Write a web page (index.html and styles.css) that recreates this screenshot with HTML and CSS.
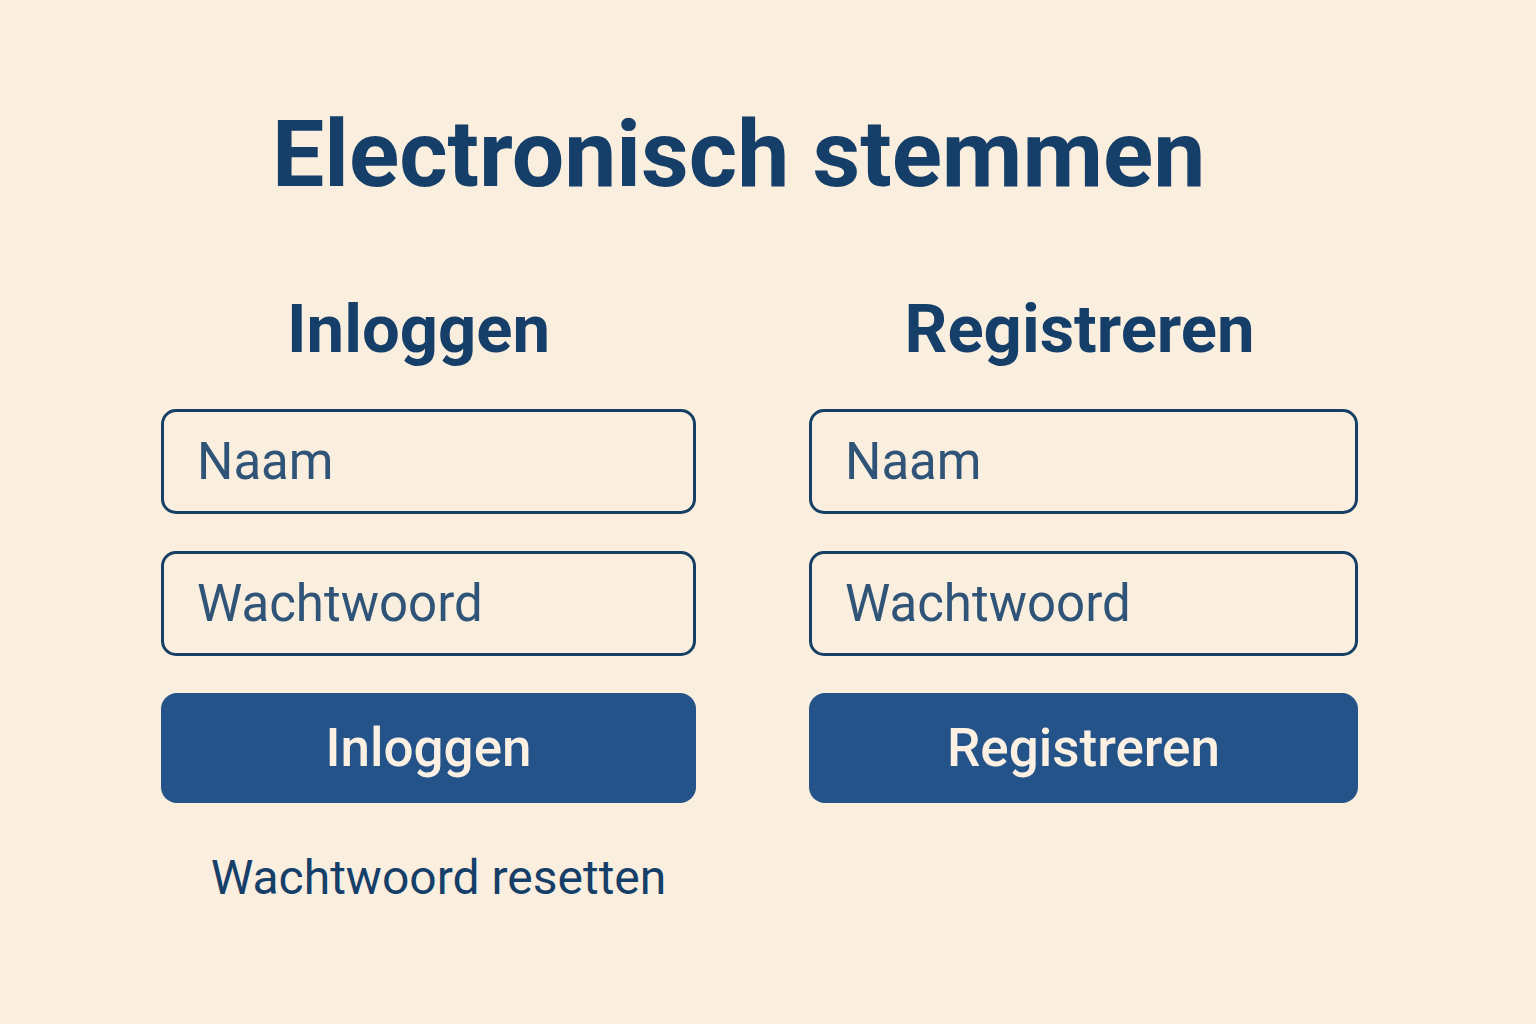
FILE: index.html
```html
<!DOCTYPE html>
<html lang="nl">
<head>
<meta charset="utf-8">
<title>Electronisch stemmen</title>
<link rel="stylesheet" href="styles.css">
</head>
<body>
<main class="page">
  <h1 class="title">Electronisch stemmen</h1>
  <div class="columns">
    <section class="panel panel-login">
      <h2 class="panel-title">Inloggen</h2>
      <input class="field" type="text" placeholder="Naam">
      <input class="field" type="password" placeholder="Wachtwoord">
      <button class="btn" type="button">Inloggen</button>
      <a class="reset-link" href="#">Wachtwoord resetten</a>
    </section>
    <section class="panel panel-register">
      <h2 class="panel-title">Registreren</h2>
      <input class="field" type="text" placeholder="Naam">
      <input class="field" type="password" placeholder="Wachtwoord">
      <button class="btn" type="button">Registreren</button>
    </section>
  </div>
</main>
</body>
</html>
```
FILE: styles.css
```css
* { box-sizing: border-box; }
html, body { margin: 0; padding: 0; }
body {
  background: #faeedf;
  font-family: Roboto, "Noto Sans", "Liberation Sans", sans-serif;
  color: #153f69;
  width: 1536px;
  height: 1024px;
  overflow: hidden;
}
.page {
  padding-top: 108px;
}
.title {
  margin: 0;
  padding-left: 272px;
  font-size: 93px;
  line-height: 1;
  font-weight: 700;
  color: #153f69;
}
.columns {
  display: grid;
  grid-template-columns: 535px 549px;
  column-gap: 113px;
  padding-left: 161px;
  margin-top: 95px;
}
.panel {
  display: flex;
  flex-direction: column;
}
.panel-title {
  margin: 0 0 46px;
  font-size: 67px;
  line-height: 1;
  font-weight: 700;
  text-align: center;
  color: #153f69;
}
.panel-login .panel-title { padding-right: 20px; }
.panel-register .panel-title { padding-right: 8px; }
.field {
  height: 105px;
  margin: 0 0 37px;
  border: 3px solid #163f66;
  border-radius: 15px;
  background: transparent;
  padding: 0 0 0 33px;
  font-family: inherit;
  font-size: 51px;
  color: #2f5478;
  outline: none;
}
.field::placeholder { color: #2f5478; opacity: 1; }
.btn {
  height: 110px;
  border: 0;
  border-radius: 16px;
  background: #24538a;
  color: #fbf0e2;
  font-family: inherit;
  font-size: 53px;
  font-weight: 500;
  cursor: pointer;
  padding: 0;
}
.reset-link {
  margin-top: 51px;
  font-size: 48px;
  line-height: 1;
  color: #153f69;
  text-decoration: none;
  text-align: center;
  padding-left: 20px;
}
```
